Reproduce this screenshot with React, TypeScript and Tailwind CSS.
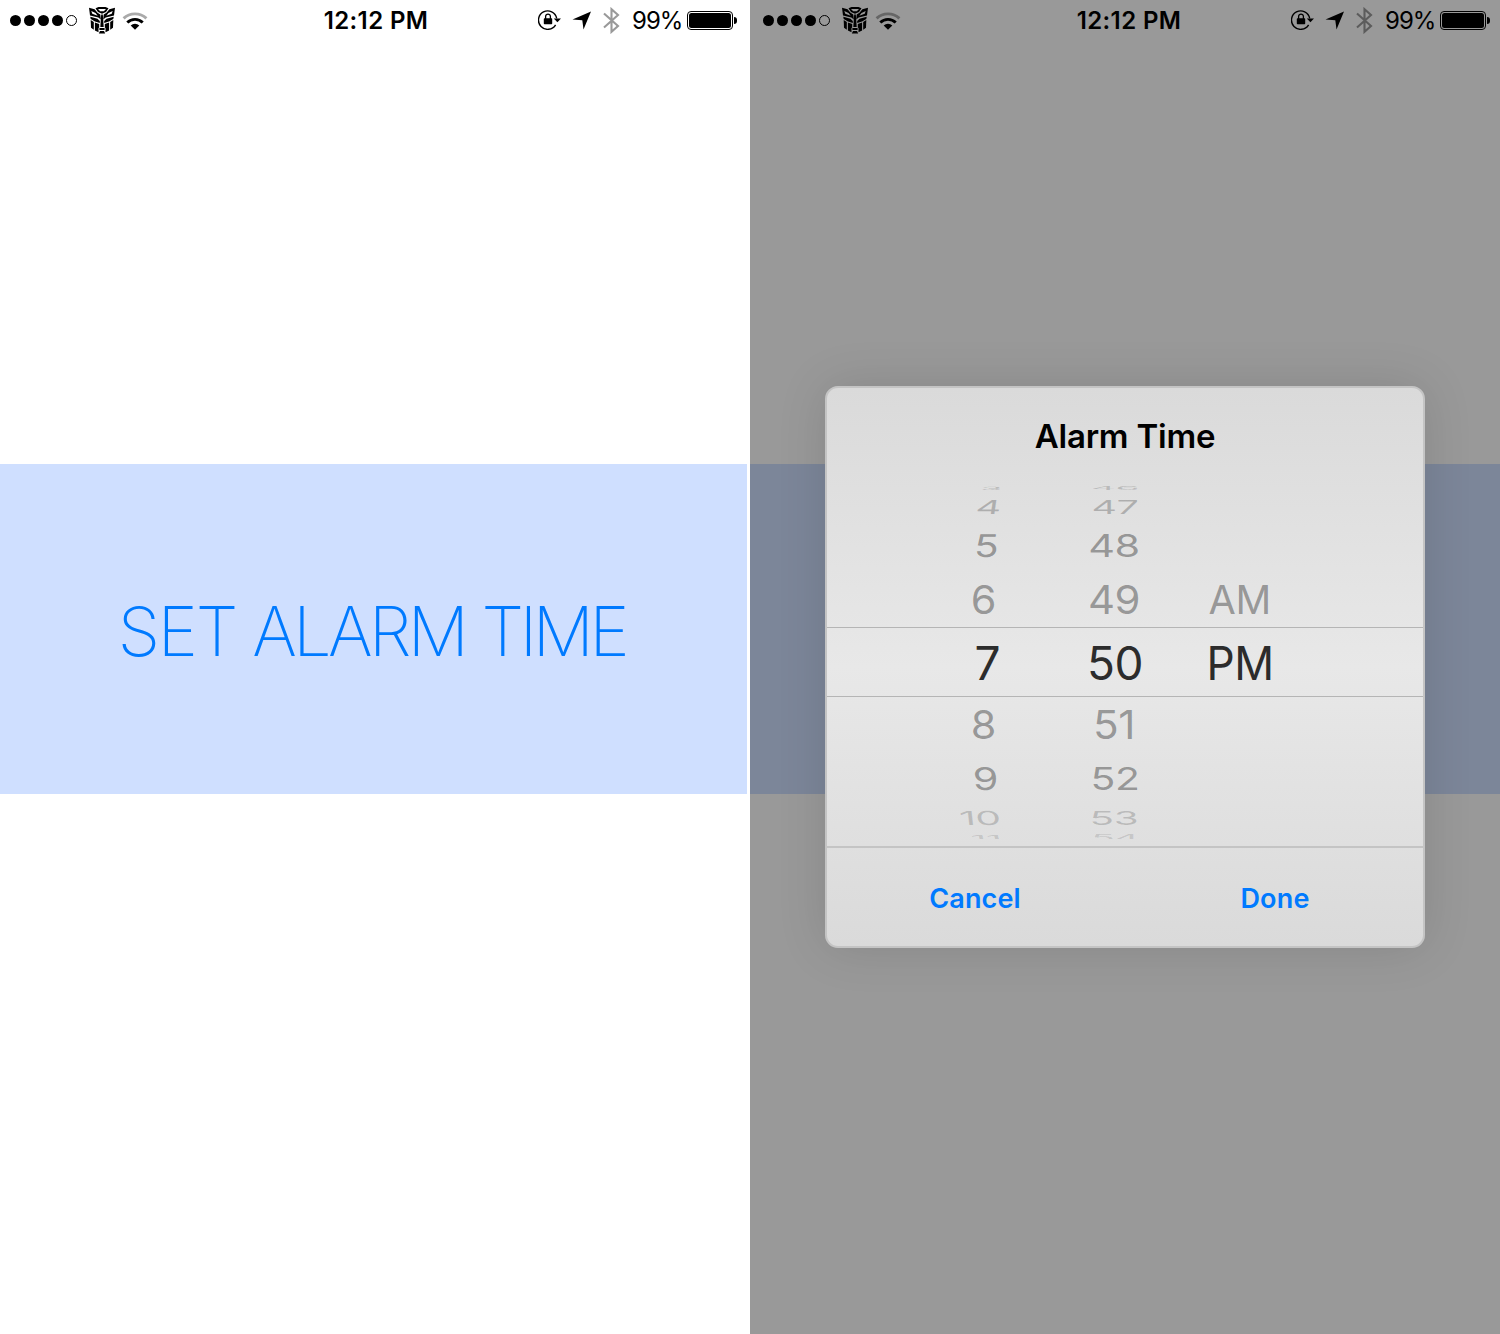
type Row = { label: string; box: string; look: string };

const HOURS: Row[] = [
  { label: '3', box: 'h-2', look: 'text-[#1a1a1a]/20 [transform:translateX(5px)_scale(0.8,0.1)_skewX(-3deg)]' },
  { label: '4', box: 'h-[30px]', look: 'text-[#1a1a1a]/25 [transform:translateX(2px)_scale(0.87,0.42)_skewX(-4deg)]' },
  { label: '5', box: 'h-[47px]', look: 'text-[#1a1a1a]/40 [transform:translate(-1px,-1px)_scale(0.88,0.68)_skewX(-3deg)]' },
  { label: '6', box: 'h-[62px]', look: 'text-[#1a1a1a]/40 [transform:translateX(-4px)_scale(0.9,0.85)]' },
  { label: '7', box: 'h-16', look: 'text-[#2c2c2c] [transform:translateX(-3px)]' },
  { label: '8', box: 'h-[61px]', look: 'text-[#1a1a1a]/40 [transform:translate(-4px,-1px)_scale(0.9,0.85)]' },
  { label: '9', box: 'h-[46px]', look: 'text-[#1a1a1a]/40 [transform:translate(-2px,-0.5px)_scale(0.9,0.68)_skewX(2deg)]' },
  { label: '10', box: 'h-[31px]', look: 'text-[#1a1a1a]/20 [transform:translate(1px,-0.5px)_scale(0.89,0.42)_skewX(3deg)]' },
  { label: '11', box: 'h-2.5', look: 'text-[#1a1a1a]/15 [transform:translateX(3px)_scale(0.85,0.18)_skewX(3deg)]' },
];

const MINUTES: Row[] = [
  { label: '46', box: 'h-2', look: 'text-[#1a1a1a]/20 [transform:scale(0.85,0.1)]' },
  { label: '47', box: 'h-[30px]', look: 'text-[#1a1a1a]/25 [transform:scale(0.86,0.42)]' },
  { label: '48', box: 'h-[47px]', look: 'text-[#1a1a1a]/40 [transform:translate(-1px,-1px)_scale(0.9,0.68)]' },
  { label: '49', box: 'h-[62px]', look: 'text-[#1a1a1a]/40 [transform:translateX(-1px)_scale(0.91,0.85)]' },
  { label: '50', box: 'h-16', look: 'text-[#2c2c2c]' },
  { label: '51', box: 'h-[61px]', look: 'text-[#1a1a1a]/40 [transform:translate(-1px,-1px)_scale(0.92,0.85)]' },
  { label: '52', box: 'h-[46px]', look: 'text-[#1a1a1a]/40 [transform:translateY(-0.5px)_scale(0.89,0.68)]' },
  { label: '53', box: 'h-[31px]', look: 'text-[#1a1a1a]/20 [transform:translate(-1px,-0.5px)_scale(0.88,0.42)]' },
  { label: '54', box: 'h-2.5', look: 'text-[#1a1a1a]/15 [transform:scale(0.84,0.18)]' },
];

const PERIODS: Row[] = [
  { label: 'AM', box: 'mt-[85px] h-[62px]', look: 'text-[#1a1a1a]/40 [transform:translateX(-0.5px)_scale(0.86,0.85)]' },
  { label: 'PM', box: 'h-16', look: 'text-[#2c2c2c] [transform:scaleX(0.96)]' },
];

function Wheel({ rows, className }: { rows: Row[]; className: string }) {
  return (
    <div className={`flex flex-col ${className}`}>
      {rows.map((r) => (
        <div key={r.label} className={`flex shrink-0 items-center ${r.box}`}>
          <span className={`block w-full shrink-0 text-[46px] leading-none tracking-[-0.5px] ${r.look}`}>{r.label}</span>
        </div>
      ))}
    </div>
  );
}

function LogoSide() {
  return (
    <>
      <path fillRule="evenodd" d="M0 0.800 L5.600 2.300 L8.500 5.800 L11.300 7.500 L11.800 12.500 L9.300 10.500 L1 8.500 Z M2.300 4 L3.300 6.800 L8.700 8.700 L6.500 6 Z" />
      <path d="M1.300 9.800 L8.500 11.800 L10.800 14 L10.800 16 L6 14.500 L1.700 12 Z" />
      <path d="M1.700 13 L4.800 15 V22.800 L2 20.800 Z" />
      <path d="M5.900 15.500 L10.200 17 V20.500 L9.500 21 V25.200 L5.900 23.600 Z" />
    </>
  );
}

function RobotLogo() {
  return (
    <svg viewBox="0 0 26 27" className="ml-3 h-[27px] w-[26px]" fill="#000">
      <LogoSide />
      <g transform="translate(26 0) scale(-1 1)">
        <LogoSide />
      </g>
      <path fillRule="evenodd" d="M6.500 1.300 L9.500 0 H16.500 L19.500 1.300 L17 5 L13 6.800 L9 5 Z M9 2 L11.200 4.200 H14.800 L17 2 Z" />
      <path d="M12.200 7.500 H13.800 L14.300 13.500 L14.700 20 H11.300 L11.700 13.500 Z" />
      <path d="M10.400 21 H15.600 V23 H10.400 Z M9.800 26.600 L11 24 H15 L16.200 26.600 Z" />
    </svg>
  );
}

function WifiIcon() {
  return (
    <svg viewBox="0 0 26 18" className="ml-[7px] h-[18px] w-[26px]" fill="none">
      <path d="M1.600 6.400 A16.500 16.500 0 0 1 24.400 6.400" stroke="#aaa" strokeWidth="2.900" />
      <path d="M5.300 10.500 A11 11 0 0 1 20.700 10.500" stroke="#000" strokeWidth="2.900" />
      <path d="M13 17.700 L8.700 13.400 A6.200 6.200 0 0 1 17.300 13.400 Z" fill="#000" />
    </svg>
  );
}

function StatusBar() {
  return (
    <div className="flex h-[41px] w-[750px] items-center text-black">
      <div className="flex w-[300px] items-center pl-2.5">
        <div className="flex gap-[3px]">
          {[0, 1, 2, 3].map((i) => (
            <span key={i} className="size-[11px] rounded-full bg-black" />
          ))}
          <span className="size-[11px] rounded-full border border-black" />
        </div>
        <RobotLogo />
        <WifiIcon />
      </div>
      <div className="w-[152px] pt-px text-center text-[24px] font-[560] tracking-[0.4px]">12:12 PM</div>
      <div className="flex flex-1 items-center justify-end pr-[13px]">
        <svg viewBox="0 0 24 20" className="mb-px h-5 w-6" fill="none">
          <path d="M17.600 14.800 A9.200 9.200 0 1 1 18.700 8.300" stroke="#000" strokeWidth="1.400" />
          <path d="M15.800 8.500 H23 L19.400 12.300 Z" fill="#000" />
          <rect x="5.800" y="8.300" width="8.400" height="6" rx="0.700" fill="#000" />
          <path d="M7.600 9 V6.500 a2.400 2.400 0 0 1 4.800 0 V9" stroke="#000" strokeWidth="1.300" />
        </svg>
        <svg viewBox="0 0 19 19" className="ml-2.5 size-[19px]">
          <path d="M19 0.500 L11.500 18.500 L10.300 9.300 L0.500 8.500 Z" fill="#000" />
        </svg>
        <svg viewBox="0 0 17 27" className="ml-3 h-[27px] w-[17px]" fill="none" stroke="#999" strokeWidth="2.100">
          <path d="M1 6.500 L15 19 L8.500 24.800 V2.200 L15 8 L1 20.500" />
        </svg>
        <span className="ml-3 w-[50px] whitespace-nowrap pt-px text-[24px] tracking-[-1px]">99%</span>
        <span className="ml-[5px] flex h-[19px] w-[46px] rounded-[4px] border border-black p-px">
          <span className="flex-1 rounded-[2.5px] bg-black" />
        </span>
        <span className="ml-px h-[7px] w-[3px] rounded-r-full bg-black" />
      </div>
    </div>
  );
}

export default function App() {
  return (
    <div className="flex h-[1334px] w-[1500px] overflow-hidden bg-white font-['Inter',sans-serif]">
      <section className="flex w-[750px] shrink-0 flex-col">
        <StatusBar />
        <button className="mt-[423px] flex h-[330px] w-[747px] items-center justify-center bg-[#cfdfff] pt-[3px] pr-1">
          <span className="whitespace-nowrap text-[68px] font-[170] tracking-[-3px] text-[#007aff]">
            <span className="tracking-[-2.2px]">SET</span> <span className="tracking-[-3.6px]">ALARM</span>{' '}
            <span className="tracking-[-4.300px]">TIME</span>
          </span>
        </button>
      </section>

      <section className="relative w-[750px] shrink-0 overflow-hidden">
        <div className="pl-[3px]">
          <StatusBar />
        </div>
        <div className="mt-[423px] h-[330px] bg-[#cfdfff]" />

        <div className="absolute inset-0 flex items-start justify-center bg-black/40">
          <div className="mt-[386px] flex h-[562px] w-[600px] flex-col overflow-hidden rounded-[13px] border-2 border-[#c4c4c4] bg-linear-to-b from-[#dadada] via-[#e8e8e8] to-[#dadada] shadow-[0_0_50px_rgba(0,0,0,0.12)]">
            <h1 className="flex h-24 items-center justify-center pt-0.5 text-[33px] font-semibold tracking-[-0.2px] text-black">Alarm Time</h1>
            <div className="relative flex h-[362px] shrink-0 justify-center">
              <div className="flex h-[355px] w-full overflow-hidden">
                <Wheel rows={HOURS} className="ml-[116px] w-[60px] text-right" />
                <Wheel rows={MINUTES} className="ml-[76px] w-[72px] text-center" />
                <Wheel rows={PERIODS} className="ml-[53px] w-[72px] text-center" />
              </div>
              <div className="absolute inset-x-0 top-[143px] h-[70px] border-y border-[#b5b5b5]" />
            </div>
            <div className="grid h-[100px] shrink-0 grid-cols-2 border-t-2 border-[#c4c4c4] pt-1 text-[27px] font-semibold text-[#007aff]">
              <button className="pr-0.5 tracking-[0.1px]">Cancel</button>
              <button className="pl-0.5 tracking-[0.2px]">Done</button>
            </div>
          </div>
        </div>
      </section>
    </div>
  );
}
